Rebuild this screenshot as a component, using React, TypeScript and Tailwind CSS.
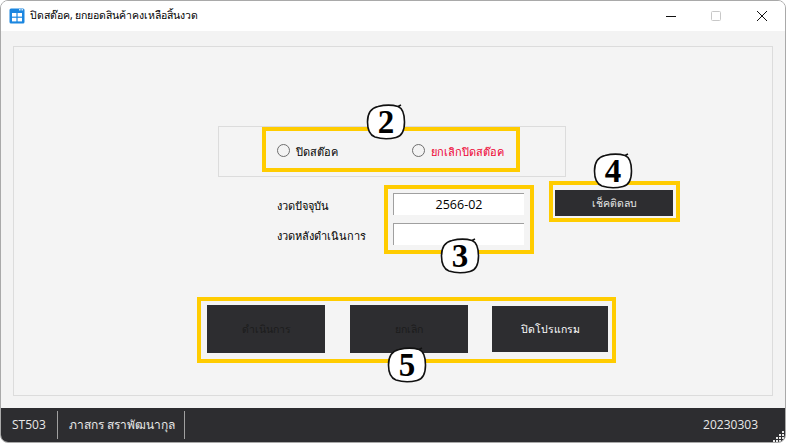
import React from 'react';

const font = "[font-family:'Open_Sans','Noto_Sans','Liberation_Sans',sans-serif]";

// hand drawn number bubble sitting over the yellow frames
function Bubble({ n, className }: { n: string; className: string }) {
  return (
    <div className={`absolute w-[40px] h-[36px] flex items-center justify-center ${className}`}>
      <svg viewBox="0 0 40 36" className="absolute inset-0 w-full h-full">
        <path
          d="M12 2.5 C18 1 27 1 32 2.5 C37 4.5 38.5 11 38.5 18 C38.5 26 36 32 30 33.5 C24 35 15 35 9 33 C3.5 31 1.5 25 1.5 18 C1.5 10 5 4 12 2.5 Z M32 2.5 L35 1"
          fill="#fff"
          stroke="#111"
          strokeWidth="1.6"
        />
      </svg>
      <span className="relative text-[33px] leading-none font-bold text-black [font-family:'Liberation_Serif',serif]">{n}</span>
    </div>
  );
}

function Radio({ label, className }: { label: string; className: string }) {
  return (
    <div className="flex items-center gap-[6px]">
      <span className="w-[13px] h-[13px] rounded-full border border-[#6e6e6e] bg-[#f3f3f3]" />
      <span className={`text-[11px] font-medium leading-none pt-[1px] ${className}`}>{label}</span>
    </div>
  );
}

function DarkButton({ label, className }: { label: string; className: string }) {
  return (
    <button className={`flex items-center justify-center bg-[#2d2d30] text-[10.5px] font-medium pt-[2px] ${className}`}>{label}</button>
  );
}

export default function App() {
  return (
    <div className={`relative w-[786px] h-[443px] flex flex-col overflow-hidden bg-white border border-[#a9a9a9] rounded-[8px] ${font}`}>
      {/* title bar */}
      <div className="h-[30px] shrink-0 bg-white flex items-center">
        <svg viewBox="0 0 16 16" className="ml-[8px] w-[16px] h-[16px]">
          <rect x="0.5" y="0.5" width="15" height="15" rx="1.5" fill="#1a86e0" />
          <rect x="10" y="1.2" width="1.6" height="1.2" fill="#fff" />
          <rect x="12.5" y="1.2" width="1.6" height="1.2" fill="#fff" />
          <rect x="3" y="5" width="4.4" height="3.6" fill="#fff" />
          <rect x="8.6" y="5" width="4.4" height="3.6" fill="#fff" />
          <rect x="3" y="9.8" width="4.4" height="3.6" fill="#fff" />
          <rect x="8.6" y="9.8" width="4.4" height="3.6" fill="#fff" />
        </svg>
        <span className="ml-[5px] text-[10.5px] text-black">ปิดสต๊อค, ยกยอดสินค้าคงเหลือสิ้นงวด</span>
        <div className="ml-auto flex items-center">
          <svg viewBox="0 0 12 12" className="w-[12px] h-[12px]"><path d="M1 6.5H11" stroke="#111" strokeWidth="1" /></svg>
          <svg viewBox="0 0 12 12" className="ml-[33px] w-[12px] h-[12px]"><rect x="1.5" y="1.5" width="9" height="9" rx="1" fill="none" stroke="#c8c8c8" /></svg>
          <svg viewBox="0 0 12 12" className="ml-[34px] mr-[17px] w-[12px] h-[12px]"><path d="M1 1L11 11M11 1L1 11" stroke="#111" strokeWidth="1" /></svg>
        </div>
      </div>

      {/* main area */}
      <div className="flex-1 min-h-0 bg-[#f3f3f3] pt-[15px] px-[12px] pb-[12px] flex">
        <div className="relative flex-1 border border-[#dcdcdc] bg-[#f4f4f4]">
          <div className="mt-[79px] ml-[204px] w-[348px] h-[51px] border border-[#dcdcdc]">
            <div className="ml-[43px] w-[258px] h-[45px] border-[4px] border-[#ffcc00] flex items-center pl-[11px] pt-[2px]">
              <div className="w-[135px]">
                <Radio label="ปิดสต๊อค" className="text-black" />
              </div>
              <Radio label="ยกเลิกปิดสต๊อค" className="text-[#ee0033]" />
            </div>
          </div>

          <div className="mt-[4px] flex items-start">
            <div className="ml-[263px] w-[107px] mt-[16px] flex flex-col gap-[13px] text-[11px] font-medium leading-[17px] text-black">
              <span>งวดปัจจุบัน</span>
              <span>งวดหลังดำเนินการ</span>
            </div>
            <div className="mt-[4px] w-[150px] h-[69px] border-[4px] border-[#ffcc00] pt-[4px] pl-[5px] flex flex-col gap-[8px]">
              <div className="w-[131px] h-[22px] bg-white border-t border-l border-[#a0a0a0] flex items-center justify-center pt-[1px] text-[12.5px] text-black">
                2566-02
              </div>
              <div className="w-[131px] h-[22px] bg-white border-t border-l border-[#a0a0a0]" />
            </div>
            <div className="ml-[15px] w-[131px] h-[41px] border-[4px] border-[#ffcc00] pt-[5px] pl-[2px]">
              <DarkButton label="เช็คติดลบ" className="w-[118px] h-[26px] text-[#e6e6e6]" />
            </div>
          </div>

          <div className="mt-[43px] ml-[183px] w-[419px] h-[66px] border-[4px] border-[#ffcc00] pt-[4px] pl-[6px] flex items-start">
            <DarkButton label="ดำเนินการ" className="w-[118px] h-[48px] text-[#1c1c1c]" />
            <DarkButton label="ยกเลิก" className="ml-[25px] w-[118px] h-[48px] text-[#1c1c1c]" />
            <DarkButton label="ปิดโปรแกรม" className="ml-[24px] mt-[1px] w-[116px] h-[46px] text-white" />
          </div>

          <Bubble n="2" className="left-[352px] top-[57px]" />
          <Bubble n="3" className="left-[426px] top-[191px]" />
          <Bubble n="4" className="left-[579px] top-[106px]" />
          <Bubble n="5" className="left-[373px] top-[300px]" />
        </div>
      </div>

      {/* status bar */}
      <div className="relative h-[34px] shrink-0 bg-[#2d2d30] text-[#e8e8e8] text-[12px] flex items-center">
        <span className="ml-[11px] w-[45px]">ST503</span>
        <span className="w-px h-[28px] bg-[#a0a0a0]" />
        <span className="ml-[11px] w-[115px]">ภาสกร สราพัฒนากุล</span>
        <span className="w-px h-[28px] bg-[#a0a0a0]" />
        <span className="ml-auto mr-[27px]">20230303</span>
        <svg viewBox="0 0 12 12" className="absolute right-0 bottom-0 w-[12px] h-[12px]">
          <g fill="#e8e8e8">
            <rect x="9" y="1" width="2" height="2" />
            <rect x="6" y="4" width="2" height="2" />
            <rect x="9" y="4" width="2" height="2" />
            <rect x="3" y="7" width="2" height="2" />
            <rect x="6" y="7" width="2" height="2" />
            <rect x="9" y="7" width="2" height="2" />
            <rect x="0" y="10" width="2" height="2" />
            <rect x="3" y="10" width="2" height="2" />
            <rect x="6" y="10" width="2" height="2" />
            <rect x="9" y="10" width="2" height="2" />
          </g>
        </svg>
      </div>
    </div>
  );
}
